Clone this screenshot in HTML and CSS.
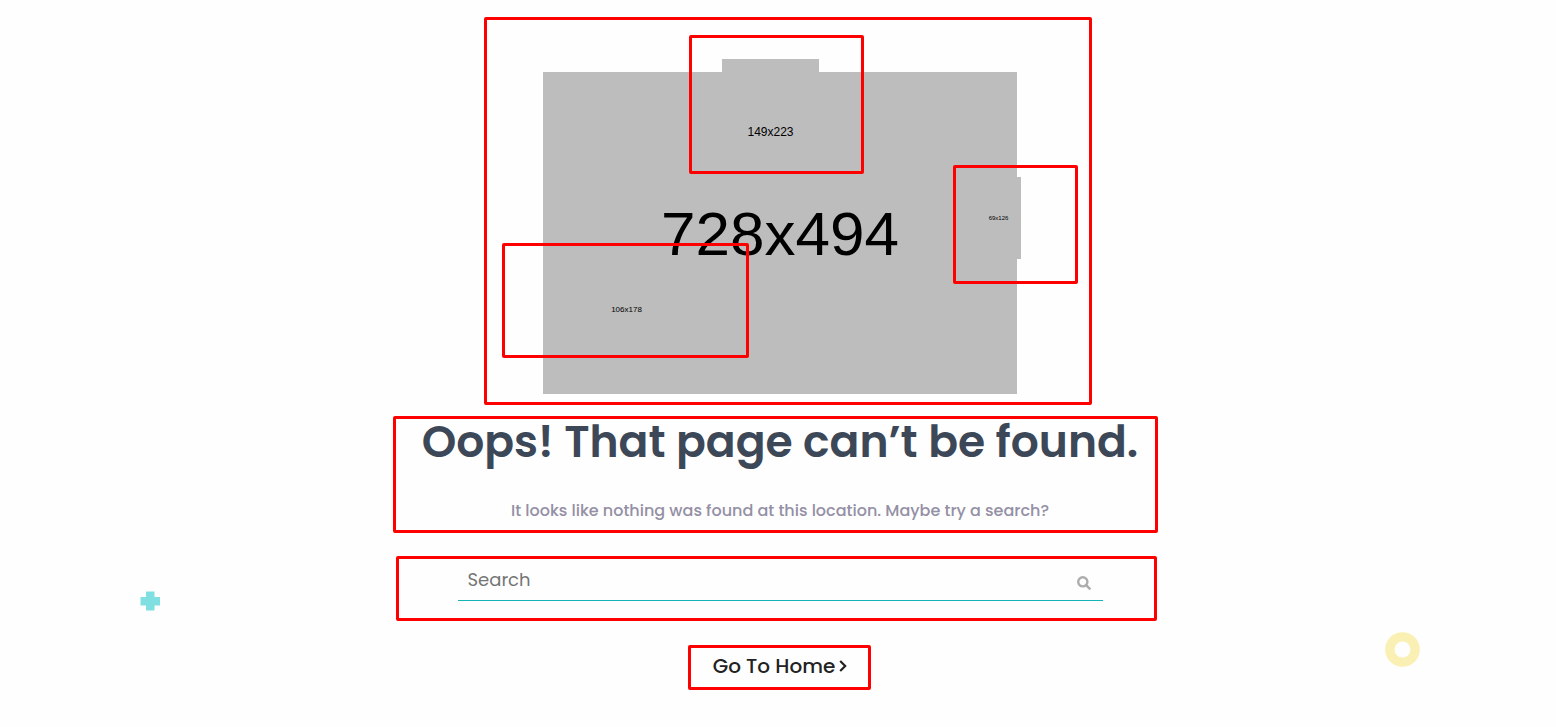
FILE: index.html
```html
<!DOCTYPE html>
<html lang="en">
<head>
<meta charset="utf-8">
<meta name="viewport" content="width=device-width, initial-scale=1">
<title>Page not found</title>
<link rel="stylesheet" href="styles.css">
</head>
<body>
<main class="page">
  <svg class="shape shape-plus" viewBox="0 0 20 20" aria-hidden="true"><path d="M6 .5h8.500v5.500h5.500v8.500h-5.500v5h-8.500v-5h-5.500v-8.500h5.500z" fill="#80dfe0"/></svg>
  <svg class="shape shape-ring" viewBox="0 0 36 36" aria-hidden="true"><circle cx="18" cy="18" r="13" fill="none" stroke="#fbf0b3" stroke-width="9.6"/></svg>

  <div class="stage">
    <div class="tile tile-main">728x494</div>
    <div class="tile tile-top">149x223</div>
    <div class="tile tile-right">69x126</div>
    <div class="tile tile-left">106x178</div>
    <span class="frame frame-stage"></span>
    <span class="frame frame-top"></span>
    <span class="frame frame-right"></span>
    <span class="frame frame-left"></span>
  </div>

  <section class="message">
    <h1 class="title">Oops! That page can’t be found.</h1>
    <p class="subtitle">It looks like nothing was found at this location. Maybe try a search?</p>
    <span class="frame frame-message"></span>
  </section>

  <form class="search" role="search">
    <input class="search-input" type="search" placeholder="Search" aria-label="Search">
    <button class="search-button" type="button" aria-label="Submit search">
      <svg class="search-icon" viewBox="0 0 14 14" aria-hidden="true"><circle cx="5.8" cy="5.8" r="4.6" fill="none" stroke="#adadad" stroke-width="2.4"/><path d="M9.200 9.200l3.400 3.400" stroke="#adadad" stroke-width="2.6" stroke-linecap="round"/></svg>
    </button>
    <span class="frame frame-search"></span>
  </form>

  <div class="home">
    <a class="home-link" href="#">Go To Home
      <svg class="home-icon" viewBox="0 0 8 12" aria-hidden="true"><path d="M1.200 1l5 5-5 5" fill="none" stroke="#222" stroke-width="2.2"/></svg>
    </a>
    <span class="frame frame-home"></span>
  </div>
</main>
</body>
</html>
```
FILE: styles.css
```css
* { box-sizing: border-box; }

body {
  margin: 0;
  background: #fefefe;
  font-family: Poppins, Inter, "Open Sans", sans-serif;
}

.page {
  position: relative;
  display: flex;
  flex-direction: column;
  align-items: center;
  min-height: 100vh;
  padding: 72px 0 36px 4px;
  overflow: hidden;
}

.shape { position: absolute; }
.shape-plus { left: 9%; top: 591px; width: 20px; height: 20px; }
.shape-ring { right: 136px; top: 632px; width: 35px; height: 35px; }

.stage {
  position: relative;
  width: 474px;
  height: 322px;
}

.tile {
  position: absolute;
  display: flex;
  align-items: center;
  justify-content: center;
  background: #bdbdbd;
  color: #000;
  font-family: "Liberation Sans", Arial, sans-serif;
}
.tile-main { inset: 0; font-size: 62px; }
.tile-top { left: 179px; top: -13px; width: 97px; height: 145px; font-size: 12px; }
.tile-right { left: 433px; top: 105px; width: 45px; height: 82px; font-size: 6px; }
.tile-left { left: 49px; top: 179px; width: 69px; height: 116px; font-size: 8px; background: none; }

.frame {
  position: absolute;
  border: 3px solid #f00;
  border-radius: 2px;
  pointer-events: none;
}
.frame-stage { left: -59px; top: -55px; width: 608px; height: 388px; }
.frame-top { left: 146px; top: -37px; width: 175px; height: 139px; }
.frame-right { left: 410px; top: 93px; width: 125px; height: 119px; }
.frame-left { left: -41px; top: 171px; width: 247px; height: 115px; }

.message {
  position: relative;
  margin-top: 20px;
  text-align: center;
}
.title {
  margin: 0;
  color: #3c4858;
  font-size: 44px;
  font-weight: 600;
  line-height: 56px;
}
.subtitle {
  margin: 29px 0 0;
  color: #9490a5;
  font-size: 16px;
  font-weight: 500;
  line-height: 24px;
}
.frame-message {
  left: calc(50% - 387px);
  top: 2px;
  width: 765px;
  height: 117px;
}

.search {
  position: relative;
  display: flex;
  align-items: center;
  width: 100%;
  max-width: 645px;
  margin-top: 35px;
  border-bottom: 1px solid #14b5b7;
}
.search-input {
  flex: 1;
  min-width: 0;
  height: 42px;
  padding: 0 10px;
  border: 0;
  background: none;
  color: #333;
  font: 400 18px/28px Poppins, Inter, "Open Sans", sans-serif;
  outline: 0;
}
.search-input::placeholder { color: #757575; }
.search-button {
  display: flex;
  padding: 8px 12px 0;
  border: 0;
  background: none;
}
.search-icon { width: 14px; height: 14px; }
.frame-search { left: -62px; top: -2px; width: 761px; height: 65px; }

.home {
  position: relative;
  margin-top: 50px;
}
.home-link {
  display: flex;
  align-items: center;
  gap: 4px;
  color: #222;
  font-size: 20px;
  font-weight: 500;
  line-height: 30px;
  text-decoration: none;
}
.home-icon { width: 8px; height: 12px; }
.frame-home { left: calc(50% - 92px); top: -6px; width: 183px; height: 45px; }
```
